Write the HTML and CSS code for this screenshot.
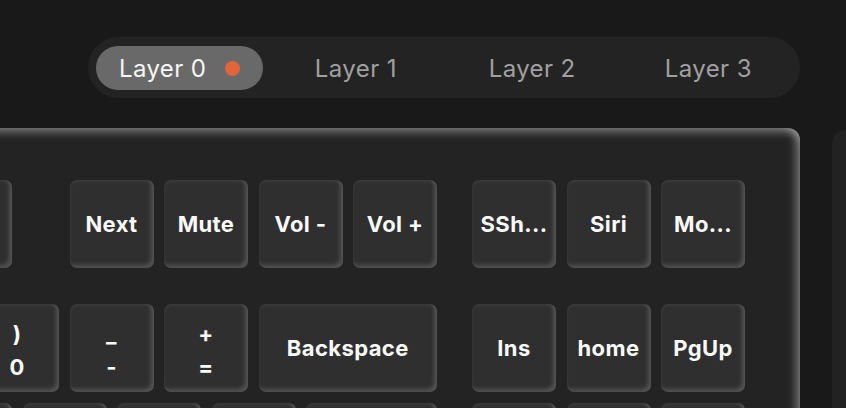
FILE: index.html
```html
<!DOCTYPE html>
<html>
<head>
<meta charset="utf-8">
<link rel="stylesheet" href="styles.css">
</head>
<body>
<div class="tabs">
  <div class="tab active"><span>Layer 0</span><span class="dot"></span></div>
  <div class="tab">Layer 1</div>
  <div class="tab">Layer 2</div>
  <div class="tab">Layer 3</div>
</div>
<div class="main">
  <div class="board">
    <div class="row fn">
      <div class="block">
        <div class="key">Prev</div>
        <div class="key group-end">Play</div>
        <div class="key">Next</div>
        <div class="key">Mute</div>
        <div class="key">Vol -</div>
        <div class="key">Vol +</div>
      </div>
      <div class="block">
        <div class="key">SSh...</div>
        <div class="key">Siri</div>
        <div class="key">Mo...</div>
      </div>
    </div>
    <div class="row">
      <div class="block">
        <div class="key two"><span>*</span><span>8</span></div>
        <div class="key two"><span>(</span><span>9</span></div>
        <div class="key two"><span>)</span><span>0</span></div>
        <div class="key two"><span>_</span><span>-</span></div>
        <div class="key two"><span>+</span><span>=</span></div>
        <div class="key w2">Backspace</div>
      </div>
      <div class="block">
        <div class="key">Ins</div>
        <div class="key">home</div>
        <div class="key">PgUp</div>
      </div>
    </div>
    <div class="row">
      <div class="block">
        <div class="key">I</div>
        <div class="key">O</div>
        <div class="key">P</div>
        <div class="key two"><span>{</span><span>[</span></div>
        <div class="key two"><span>}</span><span>]</span></div>
        <div class="key w15 two"><span>|</span><span>\</span></div>
      </div>
      <div class="block">
        <div class="key">Del</div>
        <div class="key">End</div>
        <div class="key">PgDn</div>
      </div>
    </div>
  </div>
  <div class="panel"></div>
</div>
</body>
</html>
```

FILE: styles.css
```css
html, body {
  margin: 0;
  padding: 0;
  background: #191919;
  overflow: hidden;
  font-family: Inter, "Noto Sans", sans-serif;
}
body {
  width: 846px;
  height: 408px;
  padding-top: 37px;
  box-sizing: border-box;
}
.tabs {
  margin-left: 88px;
  width: 712px;
  height: 61px;
  box-sizing: border-box;
  padding: 9px 8px 8px;
  border-radius: 31px;
  background: #232323;
  display: grid;
  grid-template-columns: repeat(4, 1fr);
  column-gap: 9px;
}
.tab {
  display: flex;
  align-items: center;
  justify-content: center;
  gap: 19px;
  font-size: 24px;
  color: #a0a0a0;
  border-radius: 22px;
  letter-spacing: 0.4px;
}
.tab.active {
  background: #696969;
  color: #f6f6f6;
}
.dot {
  width: 15px;
  height: 15px;
  border-radius: 50%;
  background: #e2643a;
}
.main {
  display: flex;
  align-items: flex-start;
  gap: 32px;
  margin-top: 30px;
}
.board {
  flex: none;
  margin-left: -160px;
  width: 960px;
  height: 330px;
  box-sizing: border-box;
  padding: 52px 55px 0 0;
  background: #232323;
  border-radius: 12px;
  box-shadow: inset 0 10px 10px -6px rgba(255,255,255,0.38),
              inset -10px 0 10px -6px rgba(255,255,255,0.38);
  display: flex;
  flex-direction: column;
  gap: 11px;
  overflow: hidden;
}
.row {
  display: flex;
  justify-content: flex-end;
  gap: 35px;
}
.row.fn {
  margin-bottom: 25px;
}
.block {
  display: flex;
  gap: 10.5px;
}
.key {
  flex: none;
  width: 84px;
  height: 88px;
  box-sizing: border-box;
  border-radius: 7px;
  background: #2f2f2f;
  box-shadow: inset -3px -3px 4px rgba(255,255,255,0.17),
              inset 0 2px 3px rgba(255,255,255,0.06);
  color: #fafafa;
  font-weight: 700;
  font-size: 22px;
  letter-spacing: 0.4px;
  display: flex;
  align-items: center;
  justify-content: center;
  white-space: nowrap;
}
.key.group-end {
  margin-right: 47px;
}
.key.w2 {
  width: 178.5px;
}
.key.w15 {
  width: 131px;
}
.key.two {
  flex-direction: column;
  gap: 8px;
  line-height: 25px;
  padding-top: 6px;
}
.panel {
  flex: none;
  margin-top: 2px;
  width: 200px;
  height: 300px;
  background: #222222;
  border-radius: 14px;
}
```
